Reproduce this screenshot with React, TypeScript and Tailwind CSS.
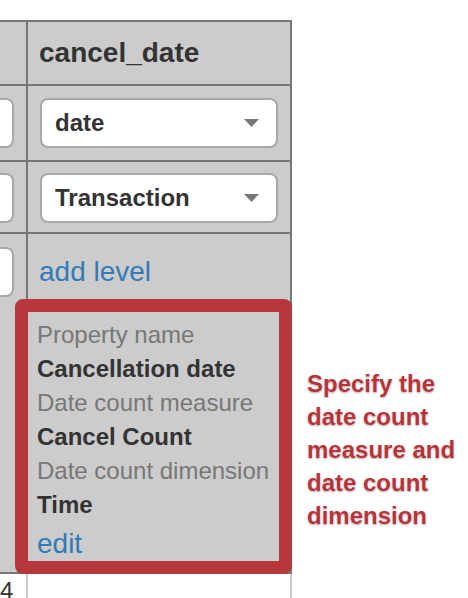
import React from "react";

function Select({ label }: { label: string }) {
  return (
    <div className="h-[50px] w-[238px] bg-white border-2 border-[#a8a8a8] rounded-[8px] flex items-center justify-between pl-[13px] pr-[17px]">
      <span className="text-[24px] font-bold text-[#333] leading-none">{label}</span>
      <svg width="15" height="8" viewBox="0 0 15 8" className="block">
        <polygon points="0,0 15,0 7.5,8" fill="#777" />
      </svg>
    </div>
  );
}

function Stub() {
  return <div className="h-[50px] w-[14px] bg-white border-2 border-l-0 border-[#a8a8a8] rounded-r-[8px]" />;
}

export default function App() {
  return (
    <div className="w-[468px] h-[598px] bg-white overflow-hidden pt-[20px] font-['Liberation_Sans',Arial,sans-serif] flex items-start">
      <div className="relative w-[292px] shrink-0">
        <div className="border-t-2 border-[#777]">
          <div className="flex h-[64px] border-b-2 border-[#777] bg-[#ccc]">
            <div className="w-[28px] shrink-0 border-r-2 border-[#777]" />
            <div className="w-[264px] shrink-0 border-r-2 border-[#777] pl-[11px] pt-[11px] text-[28px] leading-[40px] font-bold text-[#333]">
              cancel_date
            </div>
          </div>
          <div className="flex h-[76px] border-b-2 border-[#777] bg-[#ccc]">
            <div className="w-[28px] shrink-0 border-r-2 border-[#777] pt-[12px]">
              <Stub />
            </div>
            <div className="w-[264px] shrink-0 border-r-2 border-[#777] pl-[12px] pt-[12px]">
              <Select label="date" />
            </div>
          </div>
          <div className="flex h-[72px] border-b-2 border-[#777] bg-[#ccc]">
            <div className="w-[28px] shrink-0 border-r-2 border-[#777] pt-[11px]">
              <Stub />
            </div>
            <div className="w-[264px] shrink-0 border-r-2 border-[#777] pl-[12px] pt-[11px]">
              <Select label="Transaction" />
            </div>
          </div>
          <div className="flex h-[340px] border-b-2 border-[#777] bg-[#ccc]">
            <div className="w-[28px] shrink-0 border-r-2 border-[#777] pt-[13px]">
              <Stub />
            </div>
            <div className="w-[264px] shrink-0 border-r-2 border-[#777] pt-[18px]">
              <div className="pl-[11px] text-[28px] leading-[40px] text-[#337ab7]">add level</div>
              <div className="mt-[26px] pl-[9px] flex flex-col">
                <span className="text-[24px] leading-[34px] text-[#777]">Property name</span>
                <span className="text-[24px] leading-[34px] font-bold text-[#333]">Cancellation date</span>
                <span className="text-[24px] leading-[34px] text-[#777]">Date count measure</span>
                <span className="text-[24px] leading-[34px] font-bold text-[#333]">Cancel Count</span>
                <span className="text-[24px] leading-[34px] text-[#777]">Date count dimension</span>
                <span className="text-[24px] leading-[34px] font-bold text-[#333]">Time</span>
                <span className="mt-[2px] text-[28px] leading-[40px] text-[#337ab7]">edit</span>
              </div>
            </div>
          </div>
          <div className="flex h-[40px] bg-white">
            <div className="w-[28px] shrink-0 border-r-2 border-[#ccc] text-right pr-[13px] text-[24px] leading-[34px] text-[#333]">
              4
            </div>
            <div className="w-[264px] shrink-0 border-r-2 border-[#ccc]" />
          </div>
        </div>
        <div className="absolute left-[15px] top-[279px] w-[277px] h-[275px] border-[13px] border-[#b7383a] rounded-[8px] pointer-events-none" />
      </div>
      <div className="ml-[15px] mt-[347px] text-[24px] leading-[33px] font-bold text-[#b83338] [text-shadow:0_0_1px_#fff,0_1px_2px_rgba(0,0,0,0.35)]">
        Specify the
        <br />
        date count
        <br />
        measure and
        <br />
        date count
        <br />
        dimension
      </div>
    </div>
  );
}
